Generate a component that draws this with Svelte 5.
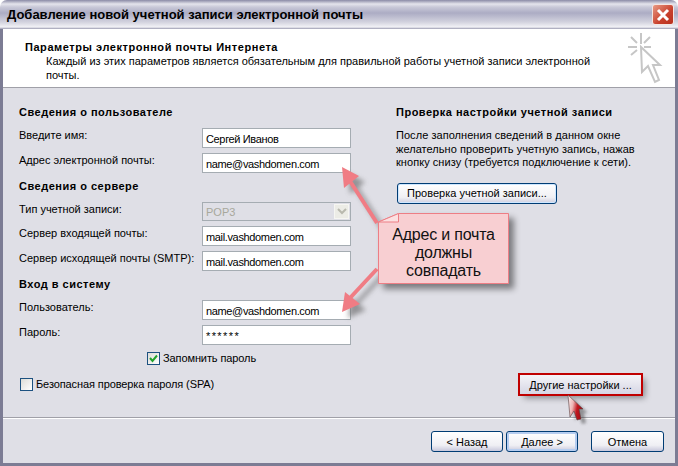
<script>
	const userRows = [
		{ label: 'Введите имя:', value: 'Сергей Иванов' },
		{ label: 'Адрес электронной почты:', value: 'name@vashdomen.com' }
	];
	const serverRows = [
		{ label: 'Сервер входящей почты:', value: 'mail.vashdomen.com' },
		{ label: 'Сервер исходящей почты (SMTP):', value: 'mail.vashdomen.com' }
	];
	const loginRows = [
		{ label: 'Пользователь:', value: 'name@vashdomen.com' },
		{ label: 'Пароль:', value: '******', secret: true }
	];
</script>

<div class="window">
	<div class="titlebar">
		<span class="title">Добавление новой учетной записи электронной почты</span>
		<button class="close" aria-label="Закрыть">
			<svg width="16" height="16" viewBox="0 0 16 16">
				<path d="M3 3 L13 13 M13 3 L3 13" stroke="#fff" stroke-width="3" fill="none" />
			</svg>
		</button>
	</div>
	<div class="frame">
		<header class="head">
			<div class="head-text">
				<h1>Параметры электронной почты Интернета</h1>
				<p>Каждый из этих параметров является обязательным для правильной работы учетной записи электронной почты.</p>
			</div>
			<svg class="wizard" width="36" height="52" viewBox="0 0 36 52">
				<path d="M14 15 L15 40 L21 34 L28 50 L32 48 L26 33 L33 33 Z" fill="#fff" stroke="#c6c6c6" stroke-width="2" />
				<path d="M14 1 V12 M1 15 H10 M17 15 H24 M4 5 L10 11 M23 5 L17 11 M4 23 L10 18" stroke="#c6c6c6" stroke-width="2" fill="none" />
			</svg>
		</header>

		<div class="body">
			<section class="form">
				<h2>Сведения о пользователе</h2>
				{#each userRows as row}
					<div class="row">
						<span>{row.label}</span>
						<div class="input">{row.value}</div>
					</div>
				{/each}

				<h2 class="next">Сведения о сервере</h2>
				<div class="row">
					<span>Тип учетной записи:</span>
					<div class="input select">
						POP3
						<span class="drop">
							<svg width="10" height="7" viewBox="0 0 10 7">
								<path d="M1 1 L5 5 L9 1" stroke="#b9b9ae" stroke-width="2" fill="none" />
							</svg>
						</span>
					</div>
				</div>
				{#each serverRows as row}
					<div class="row">
						<span>{row.label}</span>
						<div class="input">{row.value}</div>
					</div>
				{/each}

				<h2 class="next">Вход в систему</h2>
				{#each loginRows as row}
					<div class="row">
						<span>{row.label}</span>
						<div class="input" class:secret={row.secret}>{row.value}</div>
					</div>
				{/each}

				<div class="check remember">
					<span class="box">
						<svg width="9" height="9" viewBox="0 0 9 9">
							<path d="M1 4 L3.5 7 L8 1.5" stroke="#22a32c" stroke-width="2" fill="none" />
						</svg>
					</span>
					Запомнить пароль
				</div>
				<div class="check spa">
					<span class="box"></span>
					Безопасная проверка пароля (SPA)
				</div>
			</section>

			<section class="side">
				<h2>Проверка настройки учетной записи</h2>
				<p>После заполнения сведений в данном окне желательно проверить учетную запись, нажав кнопку снизу (требуется подключение к сети).</p>
				<button class="xp test">Проверка учетной записи...</button>
				<button class="xp more">Другие настройки ...</button>
			</section>
		</div>

		<footer class="foot">
			<button class="xp nav">&lt; Назад</button>
			<button class="xp nav default">Далее &gt;</button>
			<button class="xp nav cancel">Отмена</button>
		</footer>
	</div>

	<!-- annotations drawn over the dialog -->
	<svg class="arrows" width="678" height="466" viewBox="0 0 678 466">
		<defs>
			<filter id="soft" x="-30%" y="-30%" width="160%" height="160%">
				<feGaussianBlur stdDeviation="2.5" />
			</filter>
		</defs>
		<g opacity="0.55" transform="translate(6 6)" filter="url(#soft)">
			<path d="M377 223 L348 178" stroke="#555" stroke-width="4" fill="none" />
			<path d="M342 167 L359 176 L344 188 Z" fill="#555" />
			<path d="M377 269 L350 298" stroke="#555" stroke-width="4" fill="none" />
			<path d="M342 312 L345 292 L360 304 Z" fill="#555" />
		</g>
		<path d="M377 223 L348 178" stroke="#f07c84" stroke-width="4" fill="none" />
		<path d="M342 167 L359 176 L344 188 Z" fill="#f07c84" />
		<path d="M377 269 L350 298" stroke="#f07c84" stroke-width="4" fill="none" />
		<path d="M342 312 L345 292 L360 304 Z" fill="#f07c84" />
	</svg>

	<div class="callout">
		<svg class="note" width="131" height="71" viewBox="0 0 131 71">
			<path d="M0.5 9 L20.5 0.5 H130.5 V70.5 H0.5 Z" fill="#f8cfd2" stroke="#ed7e85" />
			<path d="M0.5 9 L20.5 0.5 V9 Z" fill="#fbe0e1" stroke="#ed7e85" />
		</svg>
		<span>Адрес и почта</span>
		<span>должны</span>
		<span>совпадать</span>
	</div>

	<svg class="cursor" width="32" height="36" viewBox="0 0 32 36">
		<defs>
			<linearGradient id="red" x1="0" y1="0" x2="1" y2="0.3">
				<stop offset="0" stop-color="#fbf4f4" />
				<stop offset="0.4" stop-color="#eeb4b4" />
				<stop offset="0.7" stop-color="#c01820" />
				<stop offset="1" stop-color="#a80c14" />
			</linearGradient>
			<filter id="cursor-blur" x="-30%" y="-30%" width="160%" height="160%">
				<feGaussianBlur stdDeviation="1.5" />
			</filter>
		</defs>
		<path d="M2 2 L17 16 L13 16 L15 26 L11 27 L8 18 L4 24 Z" fill="#333" opacity="0.45" transform="translate(5 4)" filter="url(#cursor-blur)" />
		<path d="M2 2 L17 16 L13 16 L15 26 L11 27 L8 18 L4 24 Z" fill="url(#red)" stroke="#5a4040" stroke-width="0.6" />
	</svg>
</div>

<style>
	:global(body) {
		margin: 0;
		background: #fff;
	}
	.window {
		position: relative;
		width: 678px;
		height: 466px;
		display: flex;
		flex-direction: column;
		overflow: hidden;
		font-family: "Liberation Sans", sans-serif;
		font-size: 11px;
		color: #000;
	}
	.titlebar {
		flex: none;
		height: 29px;
		box-sizing: border-box;
		padding: 0 4px 0 7px;
		display: flex;
		align-items: center;
		justify-content: space-between;
		border-radius: 7px 7px 0 0;
		background: linear-gradient(#8a8aa6 0, #e4e4ec 4px, #c9c9d8 7px, #acacc4 13px, #d2d2de 22px, #f2f2f6 27px, #9a9ab0 29px);
	}
	.title {
		font-size: 13px;
		font-weight: bold;
	}
	.close {
		width: 22px;
		height: 21px;
		padding: 0;
		display: flex;
		align-items: center;
		justify-content: center;
		border: 1px solid #f4e6e2;
		border-radius: 3px;
		background: linear-gradient(135deg, #e89a84, #c8402c 60%, #b8301e);
	}
	.frame {
		flex: 1;
		min-height: 0;
		display: flex;
		flex-direction: column;
		background: #dfdfe6;
		border: 3px solid #7c7c94;
		border-top: none;
	}
	.head {
		flex: none;
		height: 59px;
		box-sizing: border-box;
		padding: 12px 12px 0 22px;
		display: flex;
		justify-content: space-between;
		background: #fff;
		border-bottom: 1px solid #a0a0a8;
	}
	.head-text {
		width: 580px;
	}
	h1 {
		margin: 0;
		font-size: 11px;
		line-height: 13px;
		font-weight: bold;
		letter-spacing: 0.55px;
	}
	.head p {
		margin: 0 0 0 21px;
		line-height: 14px;
	}
	.wizard {
		margin-top: -9px;
	}
	.body {
		flex: 1;
		min-height: 0;
		display: flex;
		padding: 17px 0 0 16px;
		border-bottom: 1px solid #a0a0a8;
		box-shadow: 0 1px 0 #fff;
	}
	h2 {
		margin: 0;
		font-size: 11px;
		line-height: 14px;
		font-weight: bold;
		letter-spacing: 0.5px;
	}
	.form {
		width: 377px;
		flex: none;
		display: flex;
		flex-direction: column;
	}
	.next {
		margin-top: 6px;
	}
	.row {
		margin-top: 5px;
		width: 332px;
		display: flex;
		justify-content: space-between;
		line-height: 14px;
	}
	.form h2 + .row {
		margin-top: 9px;
	}
	.input {
		width: 149px;
		height: 20px;
		box-sizing: border-box;
		padding: 2px 2px 2px 3px;
		line-height: 16px;
		background: #fff;
		border: 1px solid #a5acb2;
		letter-spacing: -0.35px;
	}
	.secret {
		letter-spacing: 1.4px;
	}
	.select {
		height: 19px;
		background: #dfdfe6;
		color: #a8a89c;
		display: flex;
		justify-content: space-between;
		align-items: center;
		padding-right: 1px;
		letter-spacing: 0;
	}
	.drop {
		width: 15px;
		height: 15px;
		display: flex;
		align-items: center;
		justify-content: center;
		background: #ecece6;
		border: 1px solid #f6f6f2;
		box-sizing: border-box;
	}
	.check {
		display: flex;
		align-items: center;
		gap: 3px;
		line-height: 13px;
		letter-spacing: -0.1px;
	}
	.box {
		width: 13px;
		height: 13px;
		box-sizing: border-box;
		display: flex;
		align-items: center;
		justify-content: center;
		border: 1px solid #1c5180;
		background: linear-gradient(135deg, #dcdcd7, #fff);
	}
	.remember {
		margin: 7px 0 0 128px;
	}
	.spa {
		margin: 13px 0 0 1px;
	}
	.side {
		position: relative;
		flex: 1;
		padding-right: 16px;
	}
	.side p {
		margin: 10px 0 0;
		line-height: 13.5px;
		width: 260px;
		letter-spacing: 0.05px;
	}
	.xp {
		font: inherit;
		color: #000;
		height: 21px;
		padding: 0;
		border: 1px solid #003c74;
		border-radius: 3px;
		background: linear-gradient(#fff, #f0f0f4 70%, #cfcfe0);
	}
	.test {
		display: block;
		margin: 13px 0 0 1px;
		width: 160px;
		box-shadow: inset 0 0 0 1px #cee7ff;
	}
	.more {
		position: absolute;
		left: 124px;
		top: 270px;
		width: 121px;
		height: 19px;
		outline: 2px solid #c00000;
		border: none;
		border-radius: 0;
		box-shadow: 4px 4px 6px rgba(0, 0, 0, 0.4);
		background: linear-gradient(#f4f4f8, #d6d6e4);
	}
	.foot {
		flex: none;
		height: 45px;
		box-sizing: border-box;
		padding: 13px 11px 0 0;
		display: flex;
		justify-content: flex-end;
		gap: 3px;
	}
	.nav {
		width: 72px;
		height: 21px;
		background: linear-gradient(#fff, #efeff4 70%, #c8c8dc);
	}
	.default {
		box-shadow: inset 0 0 0 2px #b6cdf0;
	}
	.cancel {
		width: 73px;
		margin-left: 10px;
	}
	.arrows {
		position: absolute;
		left: 0;
		top: 0;
		pointer-events: none;
	}
	.callout {
		position: absolute;
		left: 378px;
		top: 213px;
		width: 131px;
		height: 71px;
		box-sizing: border-box;
		padding-top: 9px;
		display: flex;
		flex-direction: column;
		align-items: center;
		justify-content: center;
		font-size: 16px;
		line-height: 18px;
		letter-spacing: -0.2px;
		color: #111;
	}
	.callout span {
		position: relative;
	}
	.note {
		position: absolute;
		left: 0;
		top: 0;
		filter: drop-shadow(5px 5px 3px rgba(0, 0, 0, 0.45));
	}
	.cursor {
		position: absolute;
		left: 566px;
		top: 393px;
	}
</style>
